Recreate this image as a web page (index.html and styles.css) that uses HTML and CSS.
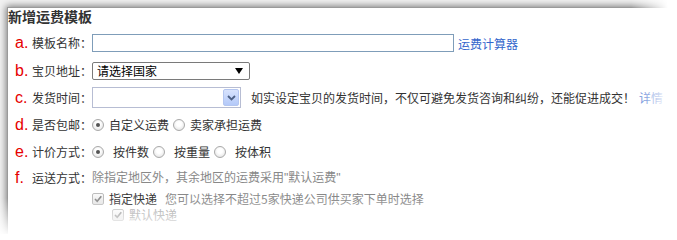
FILE: index.html
```html
<!DOCTYPE html>
<html lang="zh-CN">
<head>
<meta charset="utf-8">
<title>新增运费模板</title>
<link rel="stylesheet" href="styles.css">
</head>
<body>
<div class="page">
  <div class="panel">
    <h2 class="title">新增运费模板</h2>

    <div class="row row-a">
      <span class="idx">a.</span><span class="lbl">模板名称：</span>
      <span class="text-input"></span>
      <a class="link calc" href="#">运费计算器</a>
    </div>

    <div class="row row-b">
      <span class="idx">b.</span><span class="lbl">宝贝地址：</span>
      <span class="select-plain"><span class="sel-text">请选择国家</span>
        <svg class="sel-arrow" width="8" height="6" viewBox="0 0 8 6"><polygon points="0,0 8,0 4,6" fill="#000"/></svg>
      </span>
    </div>

    <div class="row row-c">
      <span class="idx">c.</span><span class="lbl">发货时间：</span>
      <span class="select-xp"><span class="xp-btn">
        <svg width="9" height="6" viewBox="0 0 9 6"><path d="M1 1 L4.5 4.5 L8 1" fill="none" stroke="#4d6185" stroke-width="1.8"/></svg>
      </span></span>
      <span class="hint">如实设定宝贝的发货时间，不仅可避免发货咨询和纠纷，还能促进成交！</span><a class="link more" href="#">详情</a>
    </div>

    <div class="row row-d">
      <span class="idx">d.</span><span class="lbl">是否包邮：</span>
      <span class="radio checked"></span><span class="opt">自定义运费</span>
      <span class="radio"></span><span class="opt">卖家承担运费</span>
    </div>

    <div class="row row-e">
      <span class="idx">e.</span><span class="lbl">计价方式：</span>
      <span class="radio checked"></span><span class="opt wide">按件数</span>
      <span class="radio"></span><span class="opt wide">按重量</span>
      <span class="radio"></span><span class="opt wide">按体积</span>
    </div>

    <div class="row row-f">
      <span class="idx">f.</span><span class="lbl">运送方式：</span>
      <span class="note">除指定地区外，其余地区的运费采用<span class="q">"</span>默认运费<span class="q">"</span></span>
    </div>

    <div class="row row-g">
      <span class="check"><svg width="10" height="10" viewBox="0 0 10 10"><path d="M2 5 L4.2 7.3 L8.3 2.2" fill="none" stroke="#8c8c8c" stroke-width="1.6"/></svg></span>
      <span class="opt dark">指定快递</span>
      <span class="note tip">您可以选择不超过5家快递公司供买家下单时选择</span>
    </div>

    <div class="row row-h">
      <span class="check"><svg width="10" height="10" viewBox="0 0 10 10"><path d="M2 5 L4.2 7.3 L8.3 2.2" fill="none" stroke="#8c8c8c" stroke-width="1.6"/></svg></span>
      <span class="opt faint">默认快递</span>
    </div>
  </div>
  <div class="fade-right"></div>
  <div class="fade-bottom"></div>
</div>
</body>
</html>
```

FILE: styles.css
```css
* { box-sizing: border-box; }
html, body { margin: 0; padding: 0; background: #fff; }
body {
  font-family: "Noto Sans CJK SC", "Liberation Sans", sans-serif;
  font-size: 12px;
  color: #333;
}
.page {
  position: relative;
  width: 677px;
  height: 234px;
  overflow: hidden;
  padding: 7px 0 0 7px;
  background: #f2f2f2;
}
.panel {
  background: #fff;
  height: 300px;
  width: 720px;
  box-shadow: 0 0 7px 1px rgba(0, 0, 0, 0.5);
  border-top: 1px solid #9a9a9a;
  border-left: 1px solid #9a9a9a;
}
.title {
  margin: 0 0 3px 0;
  font-size: 14px;
  font-weight: bold;
  line-height: 17px;
  color: #333;
  height: 18px;
  padding-top: 0;
}
.row {
  display: flex;
  align-items: center;
  padding-left: 7px;
  white-space: nowrap;
}
.row-a { height: 28px; }
.row-b { height: 27px; }
.row-c { height: 27px; }
.row-d { height: 27px; }
.row-e { height: 27px; }
.row-f { height: 25px; }
.row-g { height: 17px; padding-left: 84px; }
.row-h { height: 16px; padding-left: 104px; }

.idx {
  width: 17px;
  font-family: "Liberation Sans", "DejaVu Sans", sans-serif;
  font-size: 16px;
  color: #e60000;
  line-height: 16px;
}
.lbl { width: 60px; line-height: 16px; }

.text-input {
  width: 362px;
  height: 18px;
  border: 1px solid #7f9db9;
  background: #fff;
}
.link { color: #3366cc; text-decoration: none; }
.calc { margin-left: 4px; }

.select-plain {
  width: 158px;
  height: 18px;
  border: 1px solid #7a7a7a;
  border-radius: 2px;
  display: flex;
  align-items: center;
  justify-content: space-between;
  padding: 0 6px 0 4px;
  color: #000;
}
.sel-text { font-size: 12px; line-height: 16px; }

.select-xp {
  width: 149px;
  height: 21px;
  border: 1px solid #b7bdd3;
  display: flex;
  justify-content: flex-end;
  align-items: stretch;
  padding: 1px;
}
.xp-btn {
  width: 16px;
  border: 1px solid #b4c6f0;
  border-radius: 2px;
  background: linear-gradient(#d8e3fd, #b3c9f9);
  display: flex;
  align-items: center;
  justify-content: center;
}
.hint { margin-left: 10px; }
.more { margin-left: 4px; }

.radio {
  width: 12px;
  height: 12px;
  border-radius: 50%;
  border: 1px solid #a9a9a9;
  background: radial-gradient(circle at 50% 40%, #ffffff 30%, #dcdcdc 100%);
  position: relative;
  flex: none;
}
.radio.checked::after {
  content: "";
  position: absolute;
  left: 3px;
  top: 3px;
  width: 4px;
  height: 4px;
  border-radius: 50%;
  background: #555;
}
.opt { margin: 0 4px 0 5px; line-height: 16px; }
.opt.wide { margin-left: 9px; }
.opt.dark { color: #333; }
.opt.faint { color: #999; }

.note { color: #888; line-height: 16px; }
.q { font-family: "Liberation Sans", sans-serif; }
.tip { margin-left: 4px; }

.check {
  width: 12px;
  height: 12px;
  border: 1px solid #bdbdbd;
  border-radius: 2px;
  background: linear-gradient(#fafafa, #e4e4e4);
  display: flex;
  align-items: center;
  justify-content: center;
  flex: none;
}

.fade-right {
  position: absolute;
  top: 0;
  right: 0;
  width: 46px;
  height: 234px;
  background: linear-gradient(to right, rgba(255,255,255,0) 0%, rgba(255,255,255,1) 80%);
}
.fade-bottom {
  position: absolute;
  left: 0;
  bottom: 0;
  width: 677px;
  height: 36px;
  background: linear-gradient(to bottom, rgba(255,255,255,0) 0%, rgba(255,255,255,0.95) 100%);
}
```
